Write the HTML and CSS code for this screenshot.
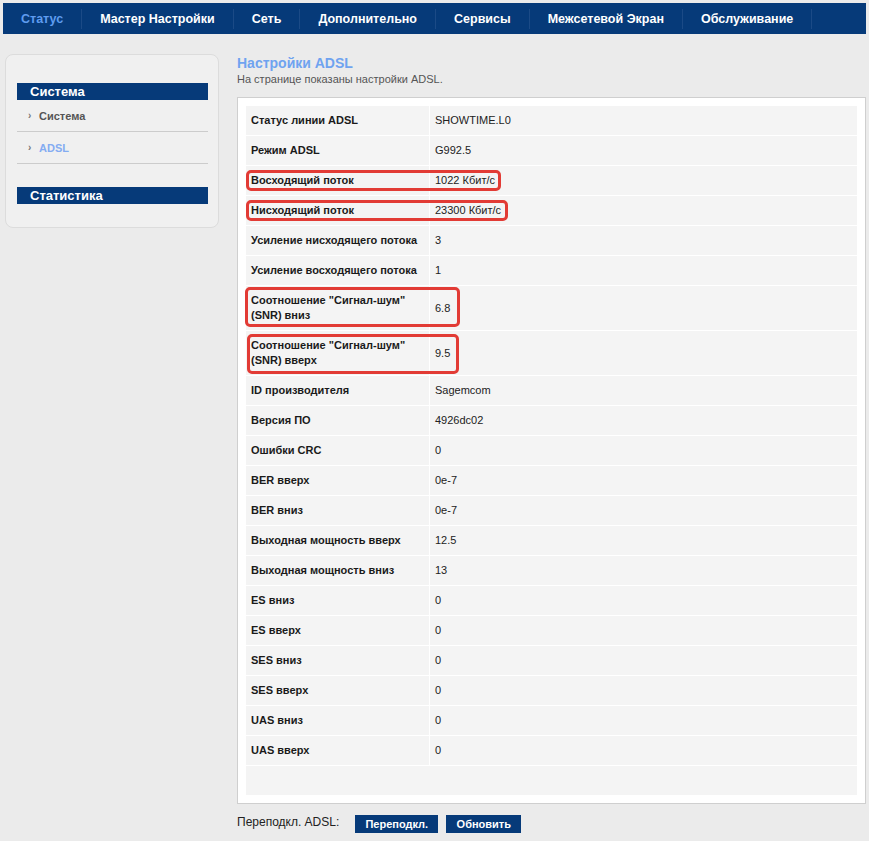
FILE: index.html
```html
<!DOCTYPE html>
<html lang="ru">
<head>
<meta charset="utf-8">
<title>Настройки ADSL</title>
<link rel="stylesheet" href="styles.css">
</head>
<body>
<nav class="topnav">
  <a class="nav-item active">Статус</a>
  <a class="nav-item">Мастер Настройки</a>
  <a class="nav-item">Сеть</a>
  <a class="nav-item">Дополнительно</a>
  <a class="nav-item">Сервисы</a>
  <a class="nav-item">Межсетевой Экран</a>
  <a class="nav-item">Обслуживание</a>
</nav>
<div class="layout">
  <aside class="sidebar">
    <div class="side-head">Система</div>
    <a class="side-link"><span class="arrow">›</span>Система</a>
    <a class="side-link current"><span class="arrow">›</span>ADSL</a>
    <div class="side-head second">Статистика</div>
  </aside>
  <main class="main">
    <h1 class="title">Настройки ADSL</h1>
    <p class="subtitle">На странице показаны настройки ADSL.</p>
    <div class="panel">
      <table class="info">
        <tr><td class="k">Статус линии ADSL</td><td class="v">SHOWTIME.L0</td></tr>
        <tr><td class="k">Режим ADSL</td><td class="v">G992.5</td></tr>
        <tr><td class="k">Восходящий поток</td><td class="v">1022 Кбит/с</td></tr>
        <tr><td class="k">Нисходящий поток</td><td class="v">23300 Кбит/с</td></tr>
        <tr><td class="k">Усиление нисходящего потока</td><td class="v">3</td></tr>
        <tr><td class="k">Усиление восходящего потока</td><td class="v">1</td></tr>
        <tr><td class="k">Соотношение "Сигнал-шум" (SNR) вниз</td><td class="v">6.8</td></tr>
        <tr><td class="k">Соотношение "Сигнал-шум" (SNR) вверх</td><td class="v">9.5</td></tr>
        <tr><td class="k">ID производителя</td><td class="v">Sagemcom</td></tr>
        <tr><td class="k">Версия ПО</td><td class="v">4926dc02</td></tr>
        <tr><td class="k">Ошибки CRC</td><td class="v">0</td></tr>
        <tr><td class="k">BER вверх</td><td class="v">0e-7</td></tr>
        <tr><td class="k">BER вниз</td><td class="v">0e-7</td></tr>
        <tr><td class="k">Выходная мощность вверх</td><td class="v">12.5</td></tr>
        <tr><td class="k">Выходная мощность вниз</td><td class="v">13</td></tr>
        <tr><td class="k">ES вниз</td><td class="v">0</td></tr>
        <tr><td class="k">ES вверх</td><td class="v">0</td></tr>
        <tr><td class="k">SES вниз</td><td class="v">0</td></tr>
        <tr><td class="k">SES вверх</td><td class="v">0</td></tr>
        <tr><td class="k">UAS вниз</td><td class="v">0</td></tr>
        <tr><td class="k">UAS вверх</td><td class="v">0</td></tr>
        <tr class="empty"><td colspan="2"></td></tr>
      </table>
      <span class="mark mark-up"></span>
      <span class="mark mark-down"></span>
      <span class="mark mark-snr-down"></span>
      <span class="mark mark-snr-up"></span>
    </div>
    <div class="actions">
      <span class="actions-label">Переподкл. ADSL:</span>
      <button class="btn">Переподкл.</button>
      <button class="btn">Обновить</button>
    </div>
  </main>
</div>
</body>
</html>
```
FILE: styles.css
```css
* { box-sizing: border-box; }
html, body { margin: 0; padding: 0; }
body {
  background: #ebebeb;
  font-family: "Liberation Sans", Arial, sans-serif;
  color: #222;
  width: 869px;
  height: 841px;
  overflow: hidden;
}

.topnav {
  margin: 3px 3px 0 3px;
  height: 31px;
  background: #063a79;
  display: flex;
  align-items: center;
}
.nav-item {
  display: block;
  padding: 0 18px;
  color: #ffffff;
  font-weight: bold;
  font-size: 12.5px;
  line-height: 20px;
  border-right: 1px solid #1b4a86;
  white-space: nowrap;
}
.nav-item.active { color: #5f9cef; }

.layout {
  display: flex;
  align-items: flex-start;
}

.sidebar {
  margin: 20px 0 0 5px;
  width: 214px;
  height: 174px;
  background: #f0f0f0;
  border: 1px solid #dcdcdc;
  border-radius: 8px;
  padding: 28px 10px 0 11px;
}
.side-head {
  height: 17px;
  background: #063a79;
  color: #ffffff;
  font-weight: bold;
  font-size: 13px;
  line-height: 17px;
  padding-left: 13px;
}
.side-head.second { margin-top: 23px; }
.side-link {
  display: flex;
  align-items: center;
  height: 32px;
  border-bottom: 1px solid #cccccc;
  font-size: 11px;
  font-weight: bold;
  color: #555555;
  padding-left: 11px;
}
.side-link .arrow {
  font-size: 10px;
  color: #777;
  width: 11px;
}
.side-link.current { color: #84acf2; }

.main {
  margin-left: 18px;
  width: 629px;
  padding-top: 21px;
}
.title {
  margin: 0;
  font-size: 14px;
  line-height: 16px;
  font-weight: bold;
  color: #6fa3f0;
}
.subtitle {
  margin: 1px 0 0 0;
  font-size: 11px;
  line-height: 14px;
  color: #555555;
}

.panel {
  position: relative;
  margin-top: 11px;
  background: #ffffff;
  border: 1px solid #cfcfcf;
  padding: 8px;
}
.info {
  width: 100%;
  border-collapse: separate;
  border-spacing: 0;
  font-size: 11px;
  line-height: 15px;
}
.info td {
  background: #f4f4f4;
  border-bottom: 1px solid #ffffff;
  padding: 7px 6px 7px 5px;
  vertical-align: middle;
}
.info td.k {
  width: 184px;
  border-right: 1px solid #ffffff;
  font-weight: bold;
  color: #1a1a1a;
}
.info td.v { color: #222; }
.info tr.empty td {
  height: 29px;
  border-bottom: none;
}

.mark {
  position: absolute;
  border: 3px solid #e23b35;
  border-radius: 5px;
  pointer-events: none;
}
.mark-up { left: 8px; top: 72px; width: 255px; height: 21px; }
.mark-down { left: 8px; top: 102px; width: 262px; height: 21px; }
.mark-snr-down { left: 7px; top: 189px; width: 215px; height: 40px; }
.mark-snr-up { left: 9px; top: 236px; width: 212px; height: 40px; }

.actions {
  display: flex;
  align-items: center;
  margin-top: 11px;
}
.actions-label {
  font-size: 12px;
  color: #222;
  margin-right: 16px;
  position: relative;
  top: -2px;
}
.btn {
  height: 18px;
  background: #063a79;
  color: #ffffff;
  border: none;
  font-family: "Liberation Sans", Arial, sans-serif;
  font-weight: bold;
  font-size: 11px;
  padding: 0 10px;
  margin-right: 8px;
  width: 83px;
}
.btn + .btn { width: 75px; }
```
